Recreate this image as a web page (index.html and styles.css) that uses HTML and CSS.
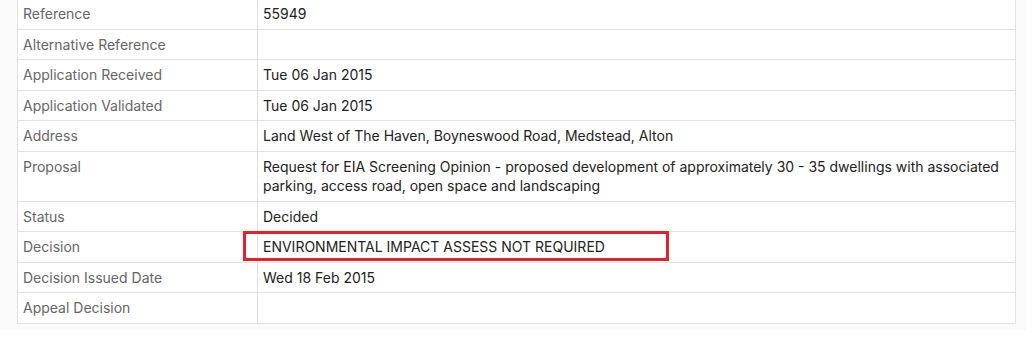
FILE: index.html
```html
<!DOCTYPE html>
<html>
<head>
<meta charset="utf-8">
<link rel="stylesheet" href="styles.css">
</head>
<body>
<div class="panel">
  <table class="details">
    <tr><th>Reference</th><td>55949</td></tr>
    <tr><th>Alternative Reference</th><td></td></tr>
    <tr><th>Application Received</th><td>Tue 06 Jan 2015</td></tr>
    <tr><th>Application Validated</th><td>Tue 06 Jan 2015</td></tr>
    <tr><th>Address</th><td>Land West of The Haven, Boyneswood Road, Medstead, Alton</td></tr>
    <tr><th>Proposal</th><td>Request for EIA Screening Opinion - proposed development of approximately 30 - 35 dwellings with associated parking, access road, open space and landscaping</td></tr>
    <tr><th>Status</th><td>Decided</td></tr>
    <tr><th>Decision</th><td class="marked"><span class="highlight"></span>ENVIRONMENTAL IMPACT ASSESS NOT REQUIRED</td></tr>
    <tr><th>Decision Issued Date</th><td>Wed 18 Feb 2015</td></tr>
    <tr><th>Appeal Decision</th><td></td></tr>
  </table>
</div>
</body>
</html>
```
FILE: styles.css
```css
html, body {
  margin: 0;
  padding: 0;
  background: #ffffff;
}
body {
  font-family: "Inter", "Liberation Sans", sans-serif;
  font-size: 14px;
  color: #222;
}
.panel {
  display: inline-block;
  background: #fafafa;
  padding: 0 10px 6px 17px;
  margin-top: -2px;
}
.details {
  border-collapse: collapse;
  width: 999px;
  background: #fff;
  border: 1px solid #e2e2e2;
}
.details th,
.details td {
  border: 1px solid #e2e2e2;
  padding: 5px 6px 5px 5px;
  line-height: 19.5px;
  text-align: left;
  vertical-align: top;
  font-weight: normal;
}
.details th {
  width: 228px;
  color: #666;
}
.details td {
  color: #222;
}
.marked {
  position: relative;
}
.highlight {
  position: absolute;
  left: -15px;
  top: -1px;
  width: 420px;
  height: 24px;
  border: 3px solid #e5202b;
}
```
